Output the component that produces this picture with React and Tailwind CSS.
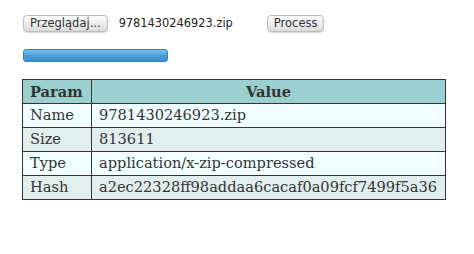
import React from 'react';

const rows = [
  { param: 'Name', value: '9781430246923.zip', bg: 'bg-[#f0ffff]' },
  { param: 'Size', value: '813611', bg: 'bg-[#e0eeee]' },
  { param: 'Type', value: 'application/x-zip-compressed', bg: 'bg-[#f0ffff]' },
  { param: 'Hash', value: 'a2ec22328ff98addaa6cacaf0a09fcf7499f5a36', bg: 'bg-[#e0eeee]' },
];

const btn =
  'h-[17px] px-[6px] rounded-[4px] border border-[#bcbcbc] bg-gradient-to-b from-[#fdfdfd] to-[#dcdcdc] text-[11.5px] leading-none text-[#333] shadow-[0_1px_1px_rgba(0,0,0,0.15)]';

const App = () => {
  return (
    <div className="w-[474px] h-[254px] bg-white font-['DejaVu_Sans',sans-serif]">
      <div className="flex items-center pt-[15px] pl-[23px]">
        <button className={btn}>Przeglądaj...</button>
        <span className="ml-[11px] text-[11.4px] text-[#222]">9781430246923.zip</span>
        <button className={btn + ' ml-[34px]'}>Process</button>
      </div>

      <div className="mt-[17px] ml-[23px] w-[145px] h-[13px] rounded-[3px] border border-[#3f7fb5] bg-gradient-to-b from-[#7cc0ee] via-[#4aa0dc] to-[#3a8fce]" />

      <table className="mt-[17px] ml-[22px] w-[424px] border-collapse border border-[#333] font-['DejaVu_Serif',serif] text-[14.6px] text-[#333]">
        <thead>
          <tr className="bg-[#9ccfcf] h-[24px]">
            <th className="w-[69px] border border-[#333] px-[7px] text-left font-bold">Param</th>
            <th className="border border-[#333] text-center font-bold">Value</th>
          </tr>
        </thead>
        <tbody>
          {rows.map(r => (
            <tr key={r.param} className={r.bg + ' h-[24px]'}>
              <td className="border border-[#333] px-[7px] leading-none">{r.param}</td>
              <td className="border border-[#333] px-[7px] leading-none">{r.value}</td>
            </tr>
          ))}
        </tbody>
      </table>
    </div>
  );
};

export default App;
